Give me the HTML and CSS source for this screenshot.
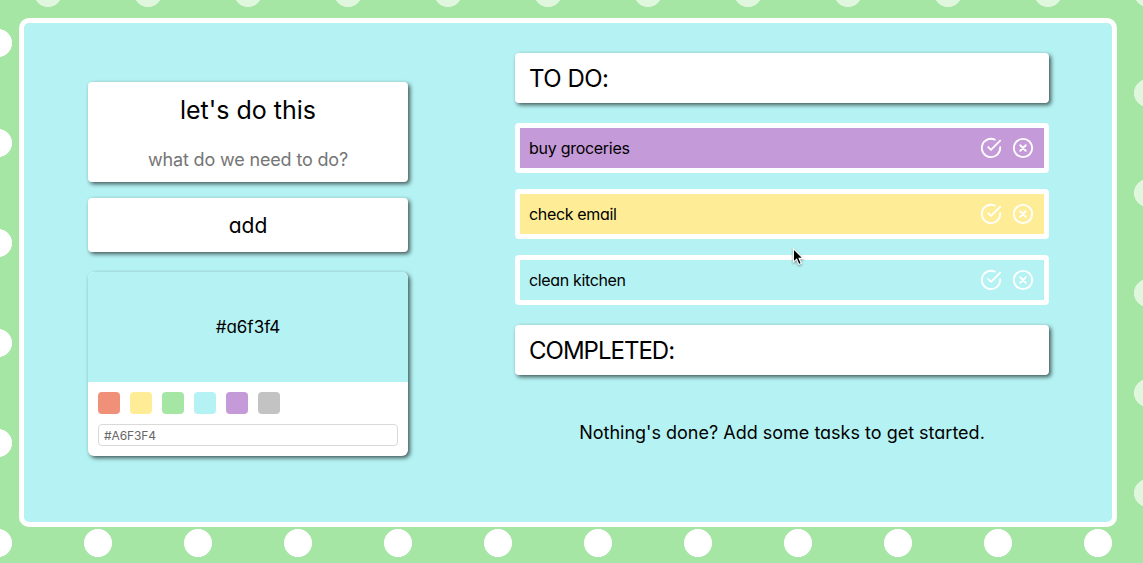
FILE: index.html
```html
<!DOCTYPE html>
<html lang="en">
<head>
<meta charset="utf-8">
<title>let's do this</title>
<link rel="stylesheet" href="styles.css">
</head>
<body>
<svg class="symbols" width="0" height="0">
  <symbol id="check" viewBox="0 0 24 24"><path d="M22 11.08V12a10 10 0 1 1-5.93-9.14"/><path d="M22 4 12 14.01l-3-3"/></symbol>
  <symbol id="remove" viewBox="0 0 24 24"><circle cx="12" cy="12" r="10"/><path d="m15 9-6 6M9 9l6 6"/></symbol>
</svg>
<main class="panel">
  <form class="sidebar">
    <section class="card entry">
      <h1 class="title"><span>let's do this</span></h1>
      <input class="task-input" type="text" placeholder="what do we need to do?">
    </section>
    <button class="card add" type="button"><span>add</span></button>
    <section class="card picker">
      <div class="preview"><span>#a6f3f4</span></div>
      <div class="picker-body">
        <div class="swatches">
          <span class="swatch coral"></span>
          <span class="swatch yellow"></span>
          <span class="swatch green"></span>
          <span class="swatch aqua"></span>
          <span class="swatch purple"></span>
          <span class="swatch gray"></span>
        </div>
        <input class="hex" type="text" value="#A6F3F4">
      </div>
    </section>
  </form>
  <section class="lists">
    <h2 class="card heading"><span class="todo-label">TO DO:</span></h2>
    <ul class="tasks">
      <li class="task purple"><span class="name groceries">buy groceries</span><svg class="icon"><use href="#check"/></svg><svg class="icon"><use href="#remove"/></svg></li>
      <li class="task yellow"><span class="name email">check email</span><svg class="icon"><use href="#check"/></svg><svg class="icon"><use href="#remove"/></svg></li>
      <li class="task aqua"><span class="name kitchen">clean kitchen</span><svg class="icon"><use href="#check"/></svg><svg class="icon"><use href="#remove"/></svg></li>
    </ul>
    <h2 class="card heading"><span class="completed-label">COMPLETED:</span></h2>
    <p class="empty"><span>Nothing's done? Add some tasks to get started.</span></p>
  </section>
</main>
<svg class="cursor" viewBox="0 0 14 21"><path d="M1.500 1.500V16L5 12.800 7.300 18.500 10 17.400 7.700 12H12Z"/></svg>
</body>
</html>
```

FILE: styles.css
```css
* { box-sizing: border-box; }

body {
  margin: 0;
  height: 563px;
  padding: 18px 26px 36px 19px;
  overflow: hidden;
  background-color: #a6e6a5;
  background-image:
    radial-gradient(circle, #fff 13.700px, transparent 14.300px),
    radial-gradient(circle, #def7dd 13.700px, transparent 14.300px);
  background-size: 100px 100px;
  background-position: 48px -7px, -2px -57px;
  color: #000;
  font-family: Inter, "Open Sans", sans-serif;
  font-feature-settings: "cv11";
}

.symbols { position: absolute; }

.panel {
  display: flex;
  gap: 107px;
  height: 509px;
  padding: 30px 63px 0 64px;
  border: 5px solid #fff;
  border-radius: 10px;
  background: #b5f2f3;
}

.sidebar {
  width: 320px;
  padding-top: 29px;
}

.card {
  border-radius: 4px;
  background: #fff;
  box-shadow: 2px 2px 4px rgba(0, 0, 0, .65);
}

.entry {
  height: 100px;
  padding-top: 8px;
  text-align: center;
}

.title {
  margin: 0;
  font-size: 25px;
  font-weight: 400;
  line-height: 40px;
}

.task-input {
  display: block;
  width: 100%;
  height: 40px;
  margin-top: 10px;
  padding: 0;
  border: 0;
  background: none;
  font: 18px/40px Inter, sans-serif;
  letter-spacing: -.160px;
  text-align: center;
}

.task-input::placeholder { color: #757575; }

.add {
  display: block;
  width: 100%;
  height: 54px;
  margin: 16px 0 20px;
  padding: 2px 0 0;
  border: 0;
  color: #000;
  font: 21px/52px Inter, sans-serif;
  font-feature-settings: "cv11";
}

.picker {
  height: 184px;
  border-radius: 6px;
  overflow: hidden;
}

.preview {
  height: 110px;
  background: #b5f2f3;
  font-size: 17px;
  line-height: 110px;
  text-align: center;
}

.picker-body { padding: 10px; }

.swatches {
  display: flex;
  gap: 10px;
  margin-bottom: 10px;
}

.swatch {
  width: 22px;
  height: 22px;
  border-radius: 4px;
}

.coral { background: #f19078; }
.yellow { background: #feed96; }
.green { background: #a6e6a5; }
.aqua { background: #b5f2f3; }
.purple { background: #c59ad8; }
.gray { background: #c3c3c3; }

.hex {
  display: block;
  width: 100%;
  height: 22px;
  padding: 0 5px;
  border: 1px solid #d9d9d9;
  border-radius: 4px;
  color: #666;
  font: 12px Inter, sans-serif;
  letter-spacing: -.100px;
}

.lists { width: 534px; }

.heading {
  height: 50px;
  margin: 0;
  padding-left: 14px;
  font-size: 24px;
  font-weight: 400;
  line-height: 52px;
}

.todo-label { letter-spacing: -.500px; }
.completed-label { letter-spacing: -1px; }

.tasks {
  display: grid;
  gap: 16px;
  margin: 20px 0;
  padding: 0;
  list-style: none;
}

.task {
  display: flex;
  align-items: center;
  gap: 10px;
  height: 50px;
  padding: 0 10px 0 9px;
  border: 5px solid #fff;
  border-radius: 4px;
}

.name {
  flex: 1;
  font-size: 16px;
}

.groceries { letter-spacing: -.280px; }
.email { letter-spacing: -.330px; }
.kitchen { letter-spacing: -.350px; }

.icon {
  width: 22px;
  height: 22px;
  fill: none;
  stroke: #fff;
  stroke-width: 2;
  stroke-linecap: round;
  stroke-linejoin: round;
}

.empty {
  margin: 46px 0 0;
  font-size: 18px;
  line-height: 24px;
  text-align: center;
}

.cursor {
  position: absolute;
  left: 792px;
  top: 247px;
  width: 13px;
  height: 20px;
  fill: #000;
  stroke: #fff;
  stroke-width: 1.200;
  filter: drop-shadow(0 1px 1px rgba(0, 0, 0, .4));
}
```
